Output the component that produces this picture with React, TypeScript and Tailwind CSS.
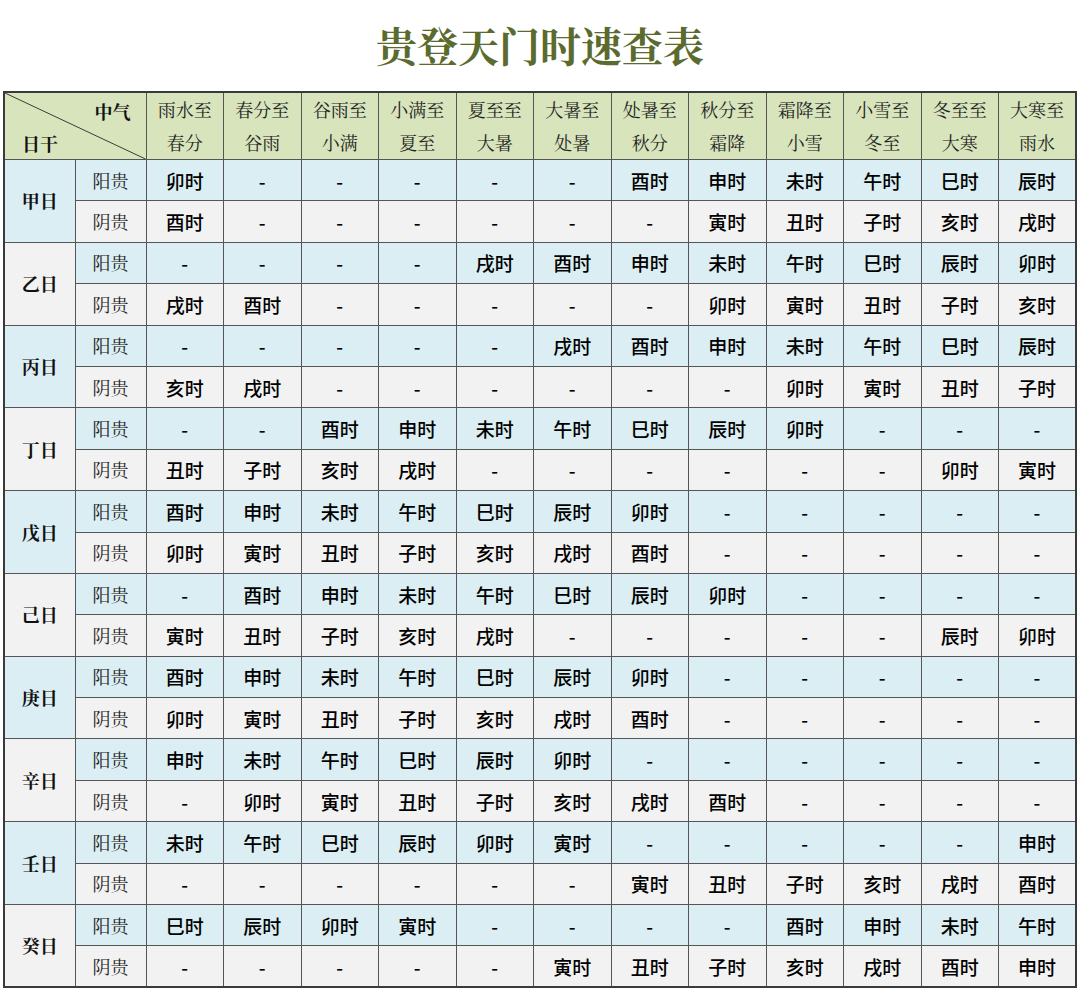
import React from 'react';

const serif = "font-['Noto_Serif_CJK_SC','Noto_Sans_CJK_SC','Liberation_Serif',serif]";
const sans = "font-['Noto_Sans_CJK_SC','Liberation_Sans',sans-serif]";

const periods: [string, string][] = [
  ['雨水至', '春分'],
  ['春分至', '谷雨'],
  ['谷雨至', '小满'],
  ['小满至', '夏至'],
  ['夏至至', '大暑'],
  ['大暑至', '处暑'],
  ['处暑至', '秋分'],
  ['秋分至', '霜降'],
  ['霜降至', '小雪'],
  ['小雪至', '冬至'],
  ['冬至至', '大寒'],
  ['大寒至', '雨水'],
];

// each stem: [阳贵 row, 阴贵 row], '-' means none
const stems: { name: string; yang: string; yin: string }[] = [
  { name: '甲日', yang: '卯 - - - - - 酉 申 未 午 巳 辰', yin: '酉 - - - - - - 寅 丑 子 亥 戌' },
  { name: '乙日', yang: '- - - - 戌 酉 申 未 午 巳 辰 卯', yin: '戌 酉 - - - - - 卯 寅 丑 子 亥' },
  { name: '丙日', yang: '- - - - - 戌 酉 申 未 午 巳 辰', yin: '亥 戌 - - - - - - 卯 寅 丑 子' },
  { name: '丁日', yang: '- - 酉 申 未 午 巳 辰 卯 - - -', yin: '丑 子 亥 戌 - - - - - - 卯 寅' },
  { name: '戊日', yang: '酉 申 未 午 巳 辰 卯 - - - - -', yin: '卯 寅 丑 子 亥 戌 酉 - - - - -' },
  { name: '己日', yang: '- 酉 申 未 午 巳 辰 卯 - - - -', yin: '寅 丑 子 亥 戌 - - - - - 辰 卯' },
  { name: '庚日', yang: '酉 申 未 午 巳 辰 卯 - - - - -', yin: '卯 寅 丑 子 亥 戌 酉 - - - - -' },
  { name: '辛日', yang: '申 未 午 巳 辰 卯 - - - - - -', yin: '- 卯 寅 丑 子 亥 戌 酉 - - - -' },
  { name: '壬日', yang: '未 午 巳 辰 卯 寅 - - - - - 申', yin: '- - - - - - 寅 丑 子 亥 戌 酉' },
  { name: '癸日', yang: '巳 辰 卯 寅 - - - - 酉 申 未 午', yin: '- - - - - 寅 丑 子 亥 戌 酉 申' },
];

const cells = (s: string) => s.split(' ').map((c) => (c === '-' ? '-' : `${c}时`));

const ValueCells: React.FC<{ row: string; bg: string }> = ({ row, bg }) => (
  <>
    {cells(row).map((v, i) => (
      <td
        key={i}
        className={`${bg} ${sans} border border-[#555] p-0 text-center text-[19px] font-medium text-black leading-none`}
      >
        {v}
      </td>
    ))}
  </>
);

export default function App() {
  return (
    <div className="w-[1080px] h-[991px] bg-white">
      <div className="h-[91px] flex items-center justify-center pb-[2px]">
        <h1 className={`${serif} text-[41px] font-bold text-[#5b6a2d]`}>贵登天门时速查表</h1>
      </div>
      <table className="mx-auto w-[1074px] table-fixed border-collapse border-2 border-[#3a3a3a]">
        <colgroup>
          <col className="w-[71px]" />
          <col className="w-[71px]" />
          {periods.map((_, i) => (
            <col key={i} />
          ))}
        </colgroup>
        <thead>
          <tr className="h-[64px] bg-[#d8e4bc]">
            <th colSpan={2} className="relative border border-[#555] p-0">
              <svg className="absolute inset-0 w-full h-full" viewBox="0 0 142 66" preserveAspectRatio="none">
                <line x1="0" y1="0" x2="142" y2="66" stroke="#3a3a3a" strokeWidth="1" />
              </svg>
              <div className={`${serif} relative h-[64px] text-[18px] font-bold text-[#111]`}>
                <span className="absolute right-[15px] top-[4px]">中气</span>
                <span className="absolute left-[17px] bottom-[1px]">日干</span>
              </div>
            </th>
            {periods.map(([a, b]) => (
              <th
                key={a}
                className={`${serif} border border-[#555] p-0 text-center text-[18px] font-normal text-[#222] leading-[33px]`}
              >
                <div>{a}</div>
                <div>{b}</div>
              </th>
            ))}
          </tr>
        </thead>
        <tbody>
          {stems.map((s, i) => {
            const stemBg = i % 2 === 0 ? 'bg-[#daeef3]' : 'bg-[#f2f2f2]';
            return (
              <React.Fragment key={s.name}>
                <tr className="h-[41.4px]">
                  <td
                    rowSpan={2}
                    className={`${stemBg} ${serif} border border-[#555] p-0 text-center text-[18px] font-bold text-[#111]`}
                  >
                    {s.name}
                  </td>
                  <td className={`bg-[#daeef3] ${serif} border border-[#555] p-0 text-center text-[18px] text-[#222]`}>
                    阳贵
                  </td>
                  <ValueCells row={s.yang} bg="bg-[#daeef3]" />
                </tr>
                <tr className="h-[41.4px]">
                  <td className={`bg-[#f2f2f2] ${serif} border border-[#555] p-0 text-center text-[18px] text-[#222]`}>
                    阴贵
                  </td>
                  <ValueCells row={s.yin} bg="bg-[#f2f2f2]" />
                </tr>
              </React.Fragment>
            );
          })}
        </tbody>
      </table>
    </div>
  );
}
